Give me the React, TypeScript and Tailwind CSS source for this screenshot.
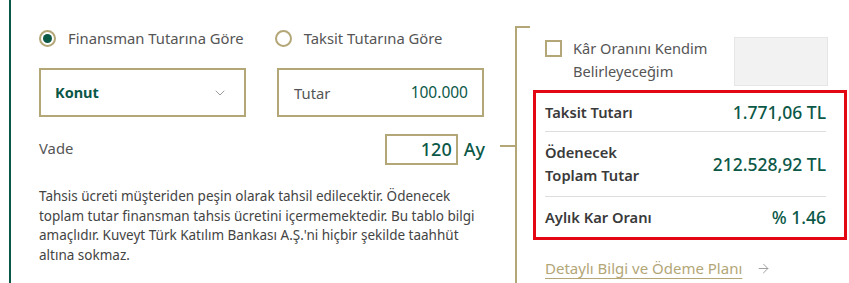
import { ChevronDown, ArrowRight } from "lucide-react";

type ResultRowProps = {
  label: React.ReactNode;
  value: string;
  className: string;
};

function ResultRow({ label, value, className }: ResultRowProps) {
  return (
    <div className={`flex items-center justify-between ${className}`}>
      <span className="text-[14.7px] font-semibold leading-[23px] text-[#3a3a3a]">
        {label}
      </span>
      <span className="text-[17.5px] font-medium text-[#0b5847]">{value}</span>
    </div>
  );
}

export default function App() {
  return (
    <div
      className="flex h-[283px] w-[849px] overflow-hidden bg-white"
      style={{ fontFamily: "'Noto Sans', sans-serif" }}
    >
      {/* left: calculation inputs */}
      <section className="ml-[9px] w-[476px] border-l-2 border-[#0b5847] pl-[28px] pt-[27px]">
        <div className="flex items-center text-[14.8px] text-[#555]">
          <label className="flex items-center gap-[12px]">
            <span className="flex h-[17px] w-[17px] items-center justify-center rounded-full border-2 border-[#b3a677]">
              <span className="h-[9px] w-[9px] rounded-full bg-[#0b5847]" />
            </span>
            Finansman Tutarına Göre
          </label>
          <label className="ml-[31px] flex items-center gap-[12px]">
            <span className="h-[17px] w-[17px] rounded-full border-2 border-[#b3a677]" />
            Taksit Tutarına Göre
          </label>
        </div>

        <div className="mt-[19px] flex gap-[31px]">
          <div className="flex h-[49px] w-[207px] items-center justify-between border-2 border-[#b3a677] pl-[14px] pr-[16px]">
            <span className="text-[14.5px] font-bold text-[#0b5847]">Konut</span>
            <ChevronDown className="h-[16px] w-[16px] text-[#9b9b9b]" strokeWidth={1.5} />
          </div>
          <div className="flex h-[49px] w-[207px] items-center justify-between border-2 border-[#b3a677] pl-[15px] pr-[14px]">
            <span className="text-[14.8px] text-[#555]">Tutar</span>
            <span className="text-[15.5px] text-[#0b5847]">100.000</span>
          </div>
        </div>

        <div className="mt-[17px] flex items-center justify-between">
          <span className="-mt-[3px] text-[14.8px] text-[#555]">Vade</span>
          <div className="flex items-center gap-[6px]">
            <div className="flex h-[31px] w-[73px] items-center justify-end border-2 border-[#b3a677] pr-[4px] text-[18px] font-medium text-[#0b5847]">
              120
            </div>
            <span className="text-[18px] font-medium text-[#0b5847]">Ay</span>
          </div>
        </div>

        <p className="mt-[22px] w-[440px] text-[13.5px] leading-[19.5px] text-[#444]">
          Tahsis ücreti müşteriden peşin olarak tahsil edilecektir. Ödenecek
          toplam tutar finansman tahsis ücretini içermemektedir. Bu tablo bilgi
          amaçlıdır. Kuveyt Türk Katılım Bankası A.Ş.'ni hiçbir şekilde taahhüt
          altına sokmaz.
        </p>
      </section>

      {/* right: results, bracketed by a gold line */}
      <section className="relative ml-[30px] mt-[28px] flex-1 border-l-2 border-[#b3a677] pl-[16px]">
        <span className="absolute -left-[2px] -top-[2px] h-[2px] w-[15px] bg-[#b3a677]" />
        <span className="absolute -left-[17px] top-[117px] h-[2px] w-[15px] bg-[#b3a677]" />

        <div className="flex items-start justify-between pr-[21px] pt-[9px]">
          <label className="flex items-start gap-[11px] pl-[12px]">
            <span className="mt-[3px] h-[17px] w-[17px] shrink-0 border-2 border-[#b3a677]" />
            <span className="text-[14.6px] leading-[23px] text-[#555]">
              Kâr Oranını Kendim
              <br />
              Belirleyeceğim
            </span>
          </label>
          <div className="h-[49px] w-[94px] border border-[#e6e6e6] bg-[#f2f2f2]" />
        </div>

        <div className="mt-[4px] w-[314px] border-[3px] border-[#e30613] pl-[9px] pr-[18px]">
          <ResultRow label="Taksit Tutarı" value="1.771,06 TL" className="h-[39px] border-b border-[#ddd]" />
          <ResultRow
            label={
              <>
                Ödenecek
                <br />
                Toplam Tutar
              </>
            }
            value="212.528,92 TL"
            className="h-[65px] border-b border-[#ddd]"
          />
          <ResultRow label="Aylık Kar Oranı" value="% 1.46" className="h-[40px]" />
        </div>

        <a
          href="#"
          className="mt-[17px] flex items-center gap-[14px] pl-[12px] text-[15px] text-[#b3a677]"
        >
          <span className="underline underline-offset-4">Detaylı Bilgi ve Ödeme Planı</span>
          <ArrowRight className="h-[15px] w-[15px] text-[#9b9b9b]" strokeWidth={1.5} />
        </a>
      </section>
    </div>
  );
}
